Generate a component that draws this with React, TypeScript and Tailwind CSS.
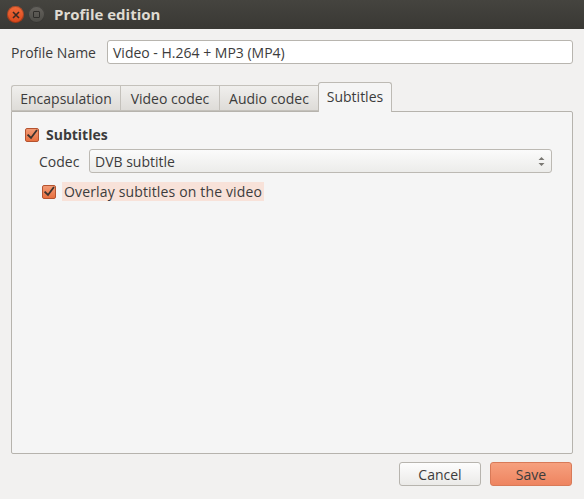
import React from 'react';

function CheckBox() {
  return (
    <span className="flex h-[14px] w-[14px] shrink-0 items-center justify-center rounded-[2px] border border-[#b5532f] bg-gradient-to-b from-[#f29a74] to-[#e8703f]">
      <svg width="12" height="12" viewBox="0 0 12 12">
        <path d="M2.2 6.2 L5 9 L10.4 1.8" fill="none" stroke="#3b332f" strokeWidth="1.8" strokeLinecap="square" />
      </svg>
    </span>
  );
}

function Tab({ label, width, active }: { label: string; width: string; active?: boolean }) {
  if (active) {
    return (
      <div className={`relative z-10 -mb-px flex h-[30px] items-center justify-center rounded-t-[3px] border border-b-0 border-[#bdbab4] bg-[#f5f5f5] pb-[2px] ${width}`}>
        {label}
      </div>
    );
  }
  return (
    <div className={`flex h-[26px] items-center justify-center border border-r-0 border-[#c4c1bb] bg-gradient-to-b from-[#f0efed] to-[#dedcd8] first:rounded-tl-[3px] ${width}`}>
      {label}
    </div>
  );
}

export default function App() {
  return (
    <div className="flex h-[499px] w-[584px] flex-col bg-[#f2f1f0] text-[14px] text-[#3c3c3c] [font-family:'Open_Sans',sans-serif]">
      <div className="flex h-[29px] shrink-0 items-center bg-gradient-to-b from-[#45443f] to-[#393834] px-[7px]">
        <span className="flex h-[17px] w-[17px] items-center justify-center rounded-full bg-gradient-to-b from-[#f26b3a] to-[#d9471a] shadow-[inset_0_0_0_1px_rgba(0,0,0,0.25)]">
          <svg width="8" height="8" viewBox="0 0 8 8">
            <path d="M1 1 L7 7 M7 1 L1 7" stroke="#3a2a24" strokeWidth="1.6" />
          </svg>
        </span>
        <span className="ml-[4px] flex h-[17px] w-[17px] items-center justify-center rounded-full bg-gradient-to-b from-[#65635e] to-[#4c4b46] shadow-[inset_0_0_0_1px_rgba(0,0,0,0.3)]">
          <span className="h-[7px] w-[7px] rounded-[1px] border-[1.5px] border-[#2e2d2a]" />
        </span>
        <span className="ml-[9px] text-[15px] font-bold text-[#dfdbd2]">Profile edition</span>
      </div>

      <div className="flex flex-1 flex-col px-[11px] pt-[11px]">
        <div className="flex items-center">
          <span className="w-[96px]">Profile Name</span>
          <div className="flex h-[24px] flex-1 items-center rounded-[3px] border border-[#b8b5af] bg-white px-[5px]">
            Video - H.264 + MP3 (MP4)
          </div>
        </div>

        <div className="mt-[18px] flex items-end">
          <Tab label="Encapsulation" width="w-[109px]" />
          <Tab label="Video codec" width="w-[99px]" />
          <Tab label="Audio codec" width="w-[99px]" />
          <Tab label="Subtitles" width="w-[74px]" active />
        </div>

        <div className="flex h-[343px] flex-col rounded-b-[2px] rounded-tr-[2px] border border-[#b6b3ad] bg-[#f5f5f5] pl-[13px] pr-[20px] pt-[12px]">
          <div className="flex items-center">
            <CheckBox />
            <span className="ml-[7px] font-bold">Subtitles</span>
          </div>
          <div className="mt-[4px] flex items-center pl-[14px]">
            <span className="w-[50px]">Codec</span>
            <div className="flex h-[24px] flex-1 items-center justify-between rounded-[3px] border border-[#bcb9b3] bg-gradient-to-b from-[#fbfbfb] to-[#ececea] pl-[5px] pr-[6px]">
              <span>DVB subtitle</span>
              <svg width="7" height="11" viewBox="0 0 7 11">
                <path d="M3.5 1 L6.5 4 L0.5 4 Z M0.5 7 L6.5 7 L3.5 10 Z" fill="#7a7873" />
              </svg>
            </div>
          </div>
          <div className="mt-[9px] flex items-center pl-[17px]">
            <CheckBox />
            <span className="ml-[6px] bg-[#f8e2d9] px-[2px] leading-[19px] tracking-[0.15px]">Overlay subtitles on the video</span>
          </div>
        </div>

        <div className="mt-[8px] flex justify-end gap-[9px] pr-[1px]">
          <button className="h-[24px] w-[82px] rounded-[3px] border border-[#b7b4ae] bg-gradient-to-b from-[#fdfdfd] to-[#ebeae8] text-[#3c3c3c]">
            Cancel
          </button>
          <button className="h-[24px] w-[82px] rounded-[3px] border border-[#d87a58] bg-gradient-to-b from-[#f6a07e] to-[#ee8460] text-[#3c3c3c]">
            Save
          </button>
        </div>
      </div>
    </div>
  );
}
